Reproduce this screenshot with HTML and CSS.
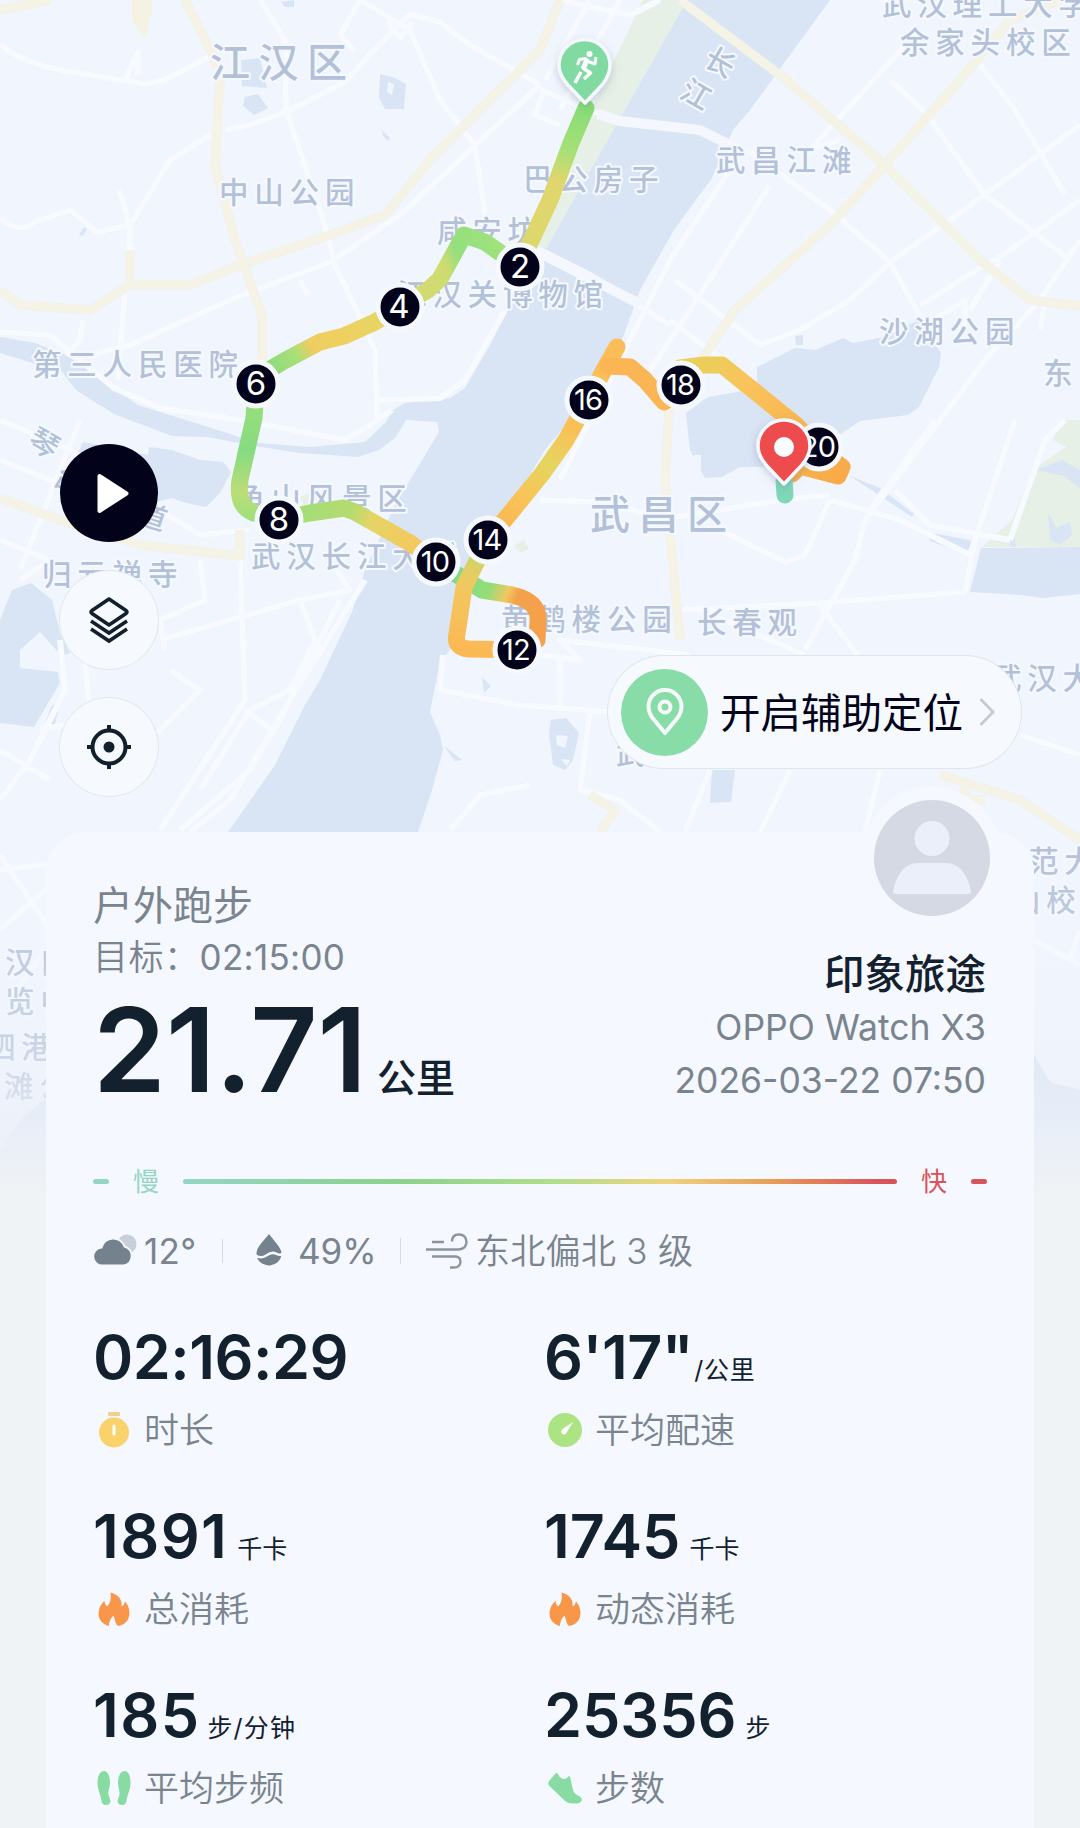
FILE: index.html
```html
<!DOCTYPE html>
<html lang="zh-CN">

<head>
	<meta charset="UTF-8" />
	<meta name="viewport" content="width=device-width, initial-scale=1.0" />
	<title>户外跑步</title>
	<link rel="stylesheet" href="styles.css">
</head>

<body>
	<div class="page">
		<div class="map">
			<svg class="map-svg" viewBox="0 0 1080 1190" width="1080" height="1190">
				<defs>
					<linearGradient id="r1" gradientUnits="userSpaceOnUse" x1="586" y1="106" x2="530" y2="250"><stop offset="0" stop-color="#86dc78" /><stop offset=".3" stop-color="#a5e077" /><stop offset=".52" stop-color="#e0d66d" /><stop offset="1" stop-color="#dcd86c" /></linearGradient>
					<linearGradient id="r2" gradientUnits="userSpaceOnUse" x1="505" y1="260" x2="400" y2="307"><stop offset="0" stop-color="#a0e27c" /><stop offset=".35" stop-color="#94df7e" /><stop offset=".5" stop-color="#cfdb70" /><stop offset="1" stop-color="#d4da72" /></linearGradient>
					<linearGradient id="r3" gradientUnits="userSpaceOnUse" x1="400" y1="307" x2="262" y2="378"><stop offset="0" stop-color="#e2d868" /><stop offset=".45" stop-color="#efd05f" /><stop offset=".62" stop-color="#efcd62" /><stop offset=".74" stop-color="#a9df78" /><stop offset="1" stop-color="#84d97c" /></linearGradient>
					<linearGradient id="r4" gradientUnits="userSpaceOnUse" x1="256" y1="384" x2="250" y2="519"><stop offset="0" stop-color="#9fe07d" /><stop offset=".5" stop-color="#86db80" /><stop offset=".8" stop-color="#bcdd77" /><stop offset="1" stop-color="#9fe07b" /></linearGradient>
					<linearGradient id="r5" gradientUnits="userSpaceOnUse" x1="279" y1="519" x2="436" y2="562"><stop offset="0" stop-color="#9ddf79" /><stop offset=".42" stop-color="#b5db70" /><stop offset=".55" stop-color="#e6d465" /><stop offset="1" stop-color="#fbc35a" /></linearGradient>
					<linearGradient id="r6" gradientUnits="userSpaceOnUse" x1="450" y1="570" x2="545" y2="610"><stop offset="0" stop-color="#7ed98b" /><stop offset=".42" stop-color="#93dd78" /><stop offset=".6" stop-color="#f0c860" /><stop offset=".7" stop-color="#f3a24c" /><stop offset="1" stop-color="#f6a04b" /></linearGradient>
					<linearGradient id="r7" gradientUnits="userSpaceOnUse" x1="461" y1="648" x2="480" y2="550"><stop offset="0" stop-color="#fbb955" /><stop offset=".6" stop-color="#f3c75f" /><stop offset="1" stop-color="#c9d76c" /></linearGradient>
					<linearGradient id="r8" gradientUnits="userSpaceOnUse" x1="487" y1="541" x2="617" y2="345"><stop offset="0" stop-color="#fbb04f" /><stop offset=".25" stop-color="#f8c559" /><stop offset=".42" stop-color="#e4d560" /><stop offset=".6" stop-color="#fbc055" /><stop offset="1" stop-color="#fbbd57" /></linearGradient>
					<linearGradient id="r9" gradientUnits="userSpaceOnUse" x1="690" y1="365" x2="840" y2="470"><stop offset="0" stop-color="#e8d05a" /><stop offset=".3" stop-color="#f9c45b" /><stop offset="1" stop-color="#f9ab49" /></linearGradient>
					<linearGradient id="fade" x1="0" y1="0" x2="0" y2="1"><stop offset="0" stop-color="#f3f7fe" stop-opacity="0" /><stop offset=".3" stop-color="#f1f5fd" stop-opacity=".2" /><stop offset=".6" stop-color="#ebf0fa" stop-opacity=".4" /><stop offset=".85" stop-color="#ecf0f9" stop-opacity=".85" /><stop offset="1" stop-color="#eff3f6" /></linearGradient>
					<filter id="shade" x="-30%" y="-30%" width="160%" height="160%"><feDropShadow dx="0" dy="3" stdDeviation="4" flood-color="#5c6c88" flood-opacity=".3" /></filter>
				</defs>

				<!-- water -->
				<g fill="#d9e4f4">
					<path d="M687 0 830 0 750 110 733 130 712 178 674 230 640 290 622 340 600 385 545 450 470 575 450 650 440 662 430 712 440 735 443 750 432 790 418 832 228 832 240 815 275 765 305 705 320 680 352 612 365 570 395 505 439 432 437 422 406 420 396 437 379 450 358 457 300 453 255 446 207 437 172 436 114 414 76 390 62 372 0 353 0 337 35 343 66 355 114 388 138 405 186 420 258 443 310 447 365 442 386 422 393 410 405 403 450 398 465 388 490 345 508 310 545 250 623 113Z" />
					<path d="M757 367 795 348 815 350 843 338 853 343 884 337 919 320 941 353 939 367 919 407 908 415 860 421 800 462 760 467 740 467 722 477 705 478 690 450 686 413 708 397 736 392 757 388Z" />
					<path d="M83 442 148 455 149 447 172 450 200 460 223 462 231 472 220 493 206 507 186 503 172 498 120 510 70 470Z" />
					<path d="M0 620 12 590 31 583 52 600 60 633 70 653 62 656 40 632 20 650 20 668 58 672 60 683 34 727 0 723ZM52 705 60 704 54 728 44 726Z" />
					<path d="M981 548 1080 547 1080 594 1043 598 1022 595 970 592ZM928 532 973 541 969 555 930 541ZM850 476 912 517 914 514 880 488Z" />
					<path d="M241 60 260 58 267 88 242 86ZM245 97 258 94 268 108 254 115 243 106ZM380 74 395 78 406 84 404 109 385 109 379 98ZM382 130 390 138 388 141 383 136ZM281 2 294 0 294 7 285 7ZM79 235 84 227 87 229 83 236ZM795 336 803 335 803 345 796 345ZM482 677 491 686 484 693ZM443 745 462 760 455 761Z" />
					<path d="M551 720 566 718 579 733 573 760 565 770 553 765 549 733ZM712 770 735 770 731 802 710 803Z" />
					<path d="M1034 1055 1050 1082 1080 1090 1080 1190 1034 1190ZM0 1150 20 1120 46 1098 46 1190 0 1190Z" />
				</g>
				<path fill="#f1f6fe" d="M388 82 394 84 392 95 387 92ZM556 735 568 736 565 748 557 745ZM561 759 570 760 567 766ZM694 455 701 455 701 472 692 468Z" />

				<!-- parks -->
				<g fill="#e6f0e7">
					<path d="M643 0 687 0 623 113 545 250 535 245 600 90Z" />
					<path d="M1080 420 1060 420 1053 440 1066 447 1032 470 1012 520 982 547 1080 547ZM300 497 316 490 322 505 305 507ZM1050 500 1060 525 1072 525 1080 505ZM514 546 524 540 529 549 520 553Z" />
				</g>
				<path fill="#d9e4f4" d="M1036 470 1062 460 1080 470 1080 488 1064 476ZM1048 513 1056 528 1070 522 1072 535 1060 545 1050 540ZM1012 522 1016 547 1010 547Z" />

				<!-- minor roads -->
				<g class="road">
					<path d="M0 44 Q20 62 60 70 L145 84 165 80 212 55M125 80 138 52 138 75M0 218 Q20 235 35 222 L70 210 97 232 130 225M260 0 285 40 286 110 325 225 335 265 375 350 377 420M210 135 170 160 130 225 130 250M119 190 130 225M225 130 250 125 290 110 345 82 372 52 410 14 440 22 470 45 540 85M360 0 340 35 355 52M360 0 410 30 440 100 475 145 485 215M540 85 400 215 330 262 230 300 130 345 90 355M83 320 80 340 66 355M0 332 50 335 114 388 160 408 240 420 345 440 370 425 392 410M125 290 118 380M540 250 590 275 670 325M300 280 308 295M378 400 440 398 465 380 505 310M388 20 400 38 412 22" />
					<path d="M590 0 545 80M620 0 560 110M558 0 630 15 660 0M540 90 620 122 700 130 750 152 830 210 890 262 925 325M545 88 535 115 560 125M840 140 810 150 905 45M890 80 925 112 985 195 1070 260M980 65 1015 110 1065 195M1080 125 950 220 890 262M890 262 850 300 800 330 760 345 675 280M1080 200 1010 250 920 305M730 170 670 260 560 480M770 185 690 310 650 370M670 320 735 370M925 325 965 300 965 325M1000 260 970 310M1080 240 1040 300 985 360 940 420 865 520 855 560 805 650M935 420 870 510M1045 300 1040 330M830 500 900 520 970 555 1015 420M830 500 805 555 785 562 720 530M830 495 780 500 670 518M0 460 100 500M540 500 600 502 670 520M895 490 930 525 1010 540M1010 540 1045 440 1065 420M680 610 820 603 965 592 975 540M820 605 865 665M700 610 805 655M540 655 580 660 560 640 690 655M560 660 560 710M443 655 440 690 520 705 610 712M590 710 580 790 620 800 660 832M710 770 685 832M790 770 760 832M880 770 865 832M1020 735 1080 755" />
					<path d="M0 540 50 560 20 580M80 420 20 570M200 560 205 600 160 620 165 650M240 560 245 700 160 830M160 640 300 600 350 590 330 560M300 600 315 640 290 690 250 710 200 790M365 580 290 700 230 800 190 832M340 600 280 720 250 770 180 830M170 670 200 690 150 740M85 660 90 720 40 730M245 710 275 732M0 750 50 780M60 640 65 690 30 760 0 800M450 830 480 795 530 785M0 420 70 450 120 485 200 535 250 530" />
					<path d="M0 855 50 930M0 930 90 850M10 1000 45 950M0 870 60 862M1034 940 1080 965M1070 960 1080 930" />
				</g>
				<!-- bridges over the river -->
				<path class="bridge" d="M598 114 620 121 700 130 750 155M530 248 640 304" />
				<!-- main roads -->
				<g class="road road-main">
					<path d="M185 0 213 55 220 80 215 165 235 240 262 315 262 370" />
					<path d="M0 10 50 0M0 290 20 305 90 310 130 285 190 285 240 265 330 235 385 215 430 160 540 50 560 0" />
					<path d="M130 285 130 250" />
					<path d="M680 0 780 75 885 165 980 260 1030 300 1080 306" />
					<path d="M1060 0 1010 20 960 80 885 165 830 225 735 310 700 362 670 395 665 480 680 640" />
					<path d="M0 498 60 520 140 545 240 556 240 530" />
					<path d="M940 775 1020 800 1080 840M965 780 965 800 985 800M590 795 615 810 600 832" />
				</g>
				<path fill="#f4f2e3" d="M132 0 152 0 152 12 145 38 138 30 132 20Z" />

				<!-- place names -->
				<g class="place place-lg">
					<text x="210" y="77">江汉区</text>
					<text x="590" y="529">武昌区</text>
				</g>
				<g class="place">
					<text x="219" y="203">中山公园</text>
					<text x="523" y="190">巴公房子</text>
					<text x="716" y="171">武昌江滩</text>
					<text x="437" y="242">咸安坊</text>
					<text x="397" y="305">江汉关博物馆</text>
					<text x="32" y="375">第三人民医院</text>
					<text x="879" y="342">沙湖公园</text>
					<text x="1043" y="384">东</text>
					<text x="882" y="15">武汉理工大学</text>
					<text x="900" y="53">余家头校区</text>
					<text x="236" y="509">龟山风景区</text>
					<text x="251" y="567">武汉长江大桥</text>
					<text x="42" y="585">归元禅寺</text>
					<text x="501" y="630">黄鹤楼公园</text>
					<text x="697" y="633">长春观</text>
					<text x="992" y="689">武汉大</text>
					<text x="616" y="764">武</text>
					<text x="1029" y="872">范大</text>
					<text x="1011" y="911">山校</text>
					<text x="5" y="973">汉口</text>
					<text x="5" y="1012">览中</text>
					<text x="-14" y="1058">泗港</text>
					<text x="4" y="1097">滩公</text>
					<text transform="translate(720 62) rotate(30)" x="-14.500" y="11">长</text>
					<text transform="translate(696 94) rotate(30)" x="-14.500" y="11">江</text>
					<text transform="translate(44 443) rotate(30)" x="-14.500" y="11">琴</text>
					<text transform="translate(69 480) rotate(30)" x="-14.500" y="11">台</text>
					<text transform="translate(152 516) rotate(18)" x="-14.500" y="11">道</text>
				</g>

				<rect y="830" width="1080" height="360" fill="url(#fade)" />

				<!-- running track, coloured by pace -->
				<g class="track">
					<path stroke="url(#r6)" d="M445 568 461 577 482 590 512 595Q540 601 538 622L537 640 517 650" />
					<path stroke="url(#r7)" d="M517 650 469 649Q454 648 457 634L464 587 487 541" />
					<path stroke="url(#r1)" d="M586 108 571 143 550 200 529 245 520 267" />
					<path stroke="url(#r2)" d="M520 267 499 252 485 242 464 235 440 279 428 290 400 307" />
					<path stroke="url(#r3)" d="M400 307 375 322 344 336 320 342 284 361 262 374" />
					<path stroke="url(#r4)" d="M256 384 254 418 240 480Q236 506 254 513L279 519" />
					<path stroke="url(#r5)" d="M279 519 310 513 344 508 355 512 410 543 436 562" />
					<path stroke="url(#r8)" d="M487 541 507 517 542 474 566 440 588 400 604 370 617 347" />
					<path stroke="#fbb554" d="M608 366 630 367 645 380 664 402 680 390" />
					<path stroke="url(#r9)" d="M680 368 704 365 722 365 795 424 820 450 842 467 838 476 800 466 792 474" />
					<path stroke="#7fd8b8" d="M784 480 785 495" />
				</g>

				<!-- kilometre marks -->
				<g class="mark">
					<circle cx="520" cy="267" r="22" /><text x="520" y="278">2</text>
					<circle cx="400" cy="307" r="22" /><text x="399" y="318">4</text>
					<circle cx="256" cy="384" r="22" /><text x="256" y="395">6</text>
					<circle cx="279" cy="520" r="22" /><text x="279" y="531">8</text>
				</g>
				<g class="mark mark-wide">
					<circle cx="436" cy="562" r="22" /><text x="435" y="572">10</text>
					<circle cx="517" cy="650" r="22" /><text x="516" y="660">12</text>
					<circle cx="488" cy="540" r="22" /><text x="487" y="550">14</text>
					<circle cx="589" cy="400" r="22" /><text x="588" y="410">16</text>
					<circle cx="681" cy="385" r="22" /><text x="680" y="395">18</text>
					<circle cx="819" cy="447" r="22" /><text x="818" y="457">20</text>
				</g>

				<!-- start pin -->
				<g filter="url(#shade)">
					<path fill="#82daa3" stroke="#f4f8fd" stroke-width="3.5" stroke-linejoin="round" d="M585 103 568 85Q559 75 559 65A25.5 25.5 0 0 1 610 65Q610 75 602 85Z" />
				</g>
				<g fill="none" stroke="#fff" stroke-width="3" stroke-linejoin="round">
					<circle cx="589.5" cy="54" r="3" fill="#fff" stroke="none" />
					<path d="M577.500 65 579.500 59.500 585 58.500 589.500 62 595 64 596 57" />
					<path stroke-width="5" d="M586.500 61 583 69" />
					<path stroke-width="3.500" d="M583 68 590.500 73 584 79M581 72 575 83" />
				</g>
				<!-- finish pin -->
				<path filter="url(#shade)" fill="#ee4b4e" stroke="#f4f8fd" stroke-width="3.5" stroke-linejoin="round" d="M784 484 767 466Q758 456 758 446A26 26 0 0 1 810 446Q810 456 801 466Z" />
				<circle cx="784" cy="447" r="10" fill="#fafcff" />
			</svg>

			<div class="map-tools">
				<button class="tool tool-dark">
					<svg viewBox="0 0 98 98" width="98" height="98"><path fill="#fff" stroke="#fff" stroke-width="4" stroke-linejoin="round" d="M39.500 32 66.500 49.500 39.500 67Z" /></svg>
				</button>
				<button class="tool">
					<svg viewBox="0 0 98 98" width="98" height="98" fill="none" stroke="#12202c" stroke-width="3.600" stroke-linejoin="round"><path d="M49 28 66 39.500Q68 41 66 42.500L49 54 32 42.500Q30 41 32 39.500Z" /><path stroke-linejoin="miter" d="M31 50 49 62 67 50M31 58 49 70 67 58" /></svg>
				</button>
				<button class="tool">
					<svg viewBox="0 0 98 98" width="98" height="98" fill="none" stroke="#12202c" stroke-width="4"><circle cx="49" cy="49" r="16.500" /><circle cx="49" cy="49" r="5.500" fill="#12202c" stroke="none" /><path d="M49 27V34M49 64V71M27 49H34M64 49H71" /></svg>
				</button>
			</div>

			<div class="locate">
				<span class="locate-icon">
					<svg viewBox="0 0 48 48" width="48" height="48" fill="none" stroke="#f5fbfa" stroke-width="4" stroke-linejoin="round"><path d="M24 45 12 30.500Q7.500 25 7.500 18.500A16.500 16.500 0 0 1 40.500 18.500Q40.500 25 36 30.500Z" /><circle cx="24" cy="19" r="5.500" /></svg>
				</span>
				<span class="locate-text">开启辅助定位</span>
				<svg viewBox="0 0 16 30" width="16" height="30" fill="none" stroke="#c6cad1" stroke-width="2.800"><path d="M1.500 2 14 15 1.500 28" /></svg>
			</div>
		</div>

		<div class="card">
			<div class="avatar">
				<svg viewBox="0 0 116 116" width="116" height="116"><circle cx="58" cy="58" r="58" fill="#d5d9e3" /><circle cx="58" cy="38.500" r="17.500" fill="#ebeffa" /><path fill="#ebeffa" d="M22 94Q18 94 19.500 89Q26 63 44 63H72Q90 63 96.500 89Q98 94 94 94Z" /></svg>
			</div>

			<div class="summary">
				<div class="run">
					<div class="run-title">户外跑步</div>
					<div class="run-goal"><span>目标：</span>02:15:00</div>
					<div class="run-distance">21.71<span>公里</span></div>
				</div>
				<div class="user">
					<div class="user-name">印象旅途</div>
					<div class="user-device">OPPO Watch X3</div>
					<div class="user-date">2026-03-22 07:50</div>
				</div>
			</div>

			<div class="pace">
				<i class="pace-dash"></i>
				<span>慢</span>
				<i class="pace-bar"></i>
				<span class="fast">快</span>
				<i class="pace-dash fast-dash"></i>
			</div>

			<div class="weather">
				<div class="weather-item temp">
					<svg viewBox="0 0 44 34" width="44" height="34"><circle cx="34" cy="10" r="9.500" fill="#c8cfd9" /><path fill="#74828e" stroke="#f5f8fe" stroke-width="2" d="M10 31.500A9 9 0 0 1 8.500 13.500A12 12 0 0 1 31.500 12.500A9.800 9.800 0 0 1 31 31.500Z" /></svg>
					<span>12°</span>
				</div>
				<div class="weather-item humidity">
					<svg viewBox="0 0 26 34" width="26" height="34"><path fill="#74828e" d="M13 0C8 7 0 13 .5 20.500Q5 23.500 9.500 20.500Q16 16 20.500 18.500Q23.500 20 25.500 19C25 13 18 7 13 0ZM1 23.800Q6 25.500 11 22.500Q16 19 20 21Q23 22.500 25.300 21.800A12.500 11 0 0 1 1 23.800Z" /></svg>
					<span>49%</span>
				</div>
				<div class="weather-item wind">
					<svg viewBox="0 0 42 36" width="42" height="36" fill="none" stroke="#8b95a0" stroke-width="2.400"><path d="M0 16.500H33Q40.500 15.500 40.500 9Q40 1.500 33 1.500Q26 1.500 26 8.500M6 9H18M6 23.500H30Q34.500 24 34.500 29Q34 34.500 28 34.500H24" /></svg>
					<span>东北偏北 3 级</span>
				</div>
			</div>

			<div class="stats">
				<div class="stat">
					<div class="stat-value time">02:16:29</div>
					<div class="stat-label">
						<svg viewBox="0 0 36 36" width="36" height="36"><rect x="12" y="0" width="12" height="4" rx="1" fill="#efd18b" /><circle cx="18" cy="20.500" r="15" fill="#f9d26c" /><rect x="16.500" y="12.500" width="3" height="11" rx="1.500" fill="#fff" /></svg>
						时长
					</div>
				</div>
				<div class="stat">
					<div class="stat-value time">6'17"<span class="tight">/公里</span></div>
					<div class="stat-label">
						<svg viewBox="0 0 36 36" width="36" height="36"><circle cx="18" cy="18" r="17" fill="#ade483" /><path fill="#fff" d="M26 10 19 21.500Q17 23.500 15 21.500Q13.500 19.500 15 17.500Z" /></svg>
						平均配速
					</div>
				</div>
				<div class="stat">
					<div class="stat-value wide">1891<span>千卡</span></div>
					<div class="stat-label">
						<svg viewBox="0 0 36 36" width="36" height="36"><path fill="#f8964a" d="M14.500 1.500C23 3.500 26.500 9.500 25.500 15.500Q28.500 14 29 10.500C33 15 33.500 19 33.500 22.500C33 29.500 29 33.500 22.500 35Q20 34 19.500 31L17.500 24.500Q13.500 28 12.800 35C6 33 2.500 28.500 2.500 22.500Q3 14 8.500 10Q8.500 13.500 11 15.500Q16 11 14.500 1.500Z" /></svg>
						总消耗
					</div>
				</div>
				<div class="stat">
					<div class="stat-value">1745<span>千卡</span></div>
					<div class="stat-label">
						<svg viewBox="0 0 36 36" width="36" height="36"><path fill="#f8964a" d="M14.500 1.500C23 3.500 26.500 9.500 25.500 15.500Q28.500 14 29 10.500C33 15 33.500 19 33.500 22.500C33 29.500 29 33.500 22.500 35Q20 34 19.500 31L17.500 24.500Q13.500 28 12.800 35C6 33 2.500 28.500 2.500 22.500Q3 14 8.500 10Q8.500 13.500 11 15.500Q16 11 14.500 1.500Z" /></svg>
						动态消耗
					</div>
				</div>
				<div class="stat">
					<div class="stat-value wide">185<span class="rate">步/分钟</span></div>
					<div class="stat-label">
						<svg viewBox="0 0 36 36" width="36" height="36" fill="#88dca3"><path d="M8 1C11.500 1 14 6 14 12C14 18 12 20 12.500 25Q14 29 14.500 31Q14 35 10 35Q6 35 5.500 31C5 25 1.500 20 1.500 13C1.500 5 4.500 1 8 1Z" /><path d="M28.500 1C25 1 22 6 22 12C22 18 24 20 23.500 25Q22 29 21.500 31Q22 35 26 35Q30 35 30.500 31C31 25 34.500 20 34.500 13C34.500 5 32 1 28.500 1Z" /></svg>
						平均步频
					</div>
				</div>
				<div class="stat">
					<div class="stat-value">25356<span>步</span></div>
					<div class="stat-label">
						<svg viewBox="0 0 36 36" width="36" height="36"><path fill="#88dca3" d="M9 3Q10.500 2.500 11.500 5Q14 9.500 18 9Q21 7.500 22 6Q23.500 6.500 23.500 9L26 20Q27 24 33 26.500Q35.500 28.500 34.500 31Q33 34 26 33.500Q20 33.500 16 29L2.500 16Q0 13 2.500 10.500Z" /></svg>
						步数
					</div>
				</div>
			</div>
		</div>
	</div>
</body>

</html>
```
FILE: styles.css
```css
* {
	box-sizing: border-box;
}

body {
	margin: 0;
	background-color: #eff3f6;
	color: #13202e;
	font-family: "Inter", "Noto Sans CJK SC", sans-serif;
}

.page {
	position: relative;
	width: 1080px;
	height: 1828px;
	overflow: hidden;
}

/* map */
.map {
	position: absolute;
	top: 0;
	left: 0;
	width: 1080px;
	height: 1190px;
	background-color: #f1f6fe;
}

.map-svg {
	display: block;
}

.road {
	fill: none;
	stroke: #f7faff;
	stroke-width: 6;
	stroke-linejoin: round;
	filter: drop-shadow(0 0 0.6px #e2e8f2);
}

.road-main {
	stroke: #f4f3e6;
	stroke-width: 9;
}

.bridge {
	fill: none;
	stroke: #f4f8fe;
	stroke-width: 10;
}

.place {
	font-family: "Noto Sans CJK SC", sans-serif;
	font-size: 29.5px;
	font-weight: 500;
	letter-spacing: 5.8px;
	fill: #b3c1d8;
	stroke: #f5f9ff;
	stroke-width: 4px;
	stroke-linejoin: round;
	paint-order: stroke;
}

.place-lg {
	font-size: 40px;
	letter-spacing: 8.5px;
}

.track {
	fill: none;
	stroke-width: 17;
	stroke-linecap: round;
	stroke-linejoin: round;
}

.mark {
	font-size: 33px;
	text-anchor: middle;
}

.mark-wide {
	font-size: 29px;
	letter-spacing: -0.8px;
}

.mark circle {
	fill: #02021a;
	stroke: #f5f9fe;
	stroke-width: 5px;
}

.mark text {
	fill: #fff;
}

/* buttons over the map */
.map-tools {
	position: absolute;
	top: 444px;
	left: 60px;
	display: flex;
	flex-direction: column;
	gap: 29px;
}

.tool {
	width: 98px;
	height: 98px;
	padding: 0;
	border: none;
	border-radius: 50%;
	background-color: #f6f9fe;
	box-shadow: 0 0 0 1px #e3e7ee;
}

.tool svg {
	display: block;
}

.tool-dark {
	background-color: #02021a;
	box-shadow: none;
}

.locate {
	position: absolute;
	top: 656px;
	left: 608px;
	width: 413px;
	height: 112px;
	display: flex;
	align-items: center;
	padding-left: 13px;
	border-radius: 56px;
	background-color: #f6f9fe;
	box-shadow: 0 0 0 1px #e1e5ec;
}

.locate-icon {
	display: flex;
	align-items: center;
	justify-content: center;
	width: 87px;
	height: 87px;
	border-radius: 50%;
	background-color: #88dca7;
}

.locate-text {
	width: 259px;
	margin-left: 12px;
	padding-top: 3px;
	color: #02021a;
	font-size: 40.5px;
	line-height: 60px;
	white-space: nowrap;
}

/* result card */
.card {
	position: relative;
	width: 988px;
	height: 996px;
	margin: 832px 46px 0;
	padding: 48px 47px 0;
	border-radius: 40px 40px 0 0;
	background-color: #f5f8fe;
}

.avatar {
	position: absolute;
	top: -45px;
	right: 31px;
	padding: 13px;
	border-radius: 50%;
	background-color: #f5f8fe;
}

.avatar svg {
	display: block;
}

.summary {
	display: flex;
	justify-content: space-between;
	height: 290px;
	color: #7a848e;
}

.run-title {
	font-size: 40px;
	line-height: 52px;
}

.run-goal {
	font-size: 35px;
	line-height: 51px;
	letter-spacing: 0.3px;
}

.run-goal span {
	font-weight: 350;
	letter-spacing: 0.5px;
}

.run-distance {
	display: flex;
	align-items: baseline;
	color: #13202e;
	font-size: 117px;
	font-weight: 600;
	line-height: 133px;
}

.run-distance span {
	margin-left: 10px;
	font-size: 39px;
	font-weight: 500;
}

.user {
	padding-top: 68px;
	margin-right: 1px;
	text-align: right;
	font-size: 35.5px;
	line-height: 53px;
}

.user-name {
	color: #13202e;
	font-size: 40.5px;
	font-weight: 500;
}

.pace {
	display: flex;
	align-items: center;
	height: 22px;
	color: #93d6c4;
	font-size: 26px;
}

.pace span {
	width: 74px;
	padding-top: 2px;
	text-align: center;
	line-height: 22px;
}

.pace .fast {
	color: #d9545a;
}

.pace-dash {
	width: 16px;
	height: 5px;
	border-radius: 3px;
	background-color: #93d6c4;
}

.fast-dash {
	background-color: #d9545a;
}

.pace-bar {
	flex: 1;
	height: 5px;
	border-radius: 3px;
	background: linear-gradient(90deg, #93d6c4, #8bd28c 30%, #b0de8a 52%, #f0d37c 68%, #e89a57 83%, #d9545a 97%);
}

.weather {
	display: flex;
	align-items: center;
	height: 60px;
	margin-top: 29px;
	color: #7a848e;
	font-size: 35px;
}

.weather-item {
	display: flex;
	align-items: center;
}

.temp {
	width: 129px;
	gap: 7px;
	letter-spacing: 0.3px;
}

.humidity {
	width: 178px;
	padding-left: 33px;
	gap: 16px;
	border-left: 1px solid #d6dbe3;
	line-height: 24px;
}

.wind {
	gap: 7px;
	padding-left: 25px;
	border-left: 1px solid #d6dbe3;
	font-weight: 350;
	letter-spacing: 0.3px;
	line-height: 24px;
	white-space: nowrap;
}

.weather-item svg {
	flex: none;
	margin: -5px 0;
}

.stats {
	display: grid;
	grid-template-columns: 451px 1fr;
	grid-auto-rows: 179px;
	margin-top: 39px;
}

.stat-value {
	display: flex;
	align-items: baseline;
	height: 80px;
	font-size: 61px;
	font-weight: 600;
	line-height: 74px;
}

.stat-value.time {
	letter-spacing: -0.5px;
}

.stat-value.wide {
	letter-spacing: 1.4px;
}

.stat-value span {
	margin-left: 9px;
	font-size: 25px;
	font-weight: 400;
	letter-spacing: 0;
}

.stat-value .tight {
	margin-left: 1px;
	letter-spacing: 0.8px;
}

.stat-value .rate {
	margin-left: 7px;
	letter-spacing: 1.2px;
}

.stat-label {
	display: flex;
	align-items: center;
	gap: 12px;
	padding-left: 3px;
	color: #7a848e;
	font-size: 35px;
	font-weight: 350;
	line-height: 60px;
}
```
